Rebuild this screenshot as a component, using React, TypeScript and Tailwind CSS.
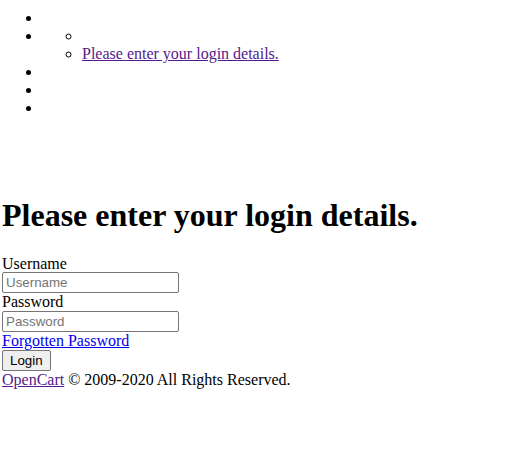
export default function App() {
  const serif = "font-['Liberation_Serif','Times_New_Roman',serif]";
  return (
    <div className={`${serif} text-[16px] leading-[18px] text-black bg-white min-h-[450px] px-[2px] pt-[9px]`}>
      <ul className="list-disc pl-[40px]">
        <li>&nbsp;</li>
        <li>
          <ul className="list-[circle] pl-[40px]">
            <li>&nbsp;</li>
            <li>
              <a href="#" className="text-[#551a8b] underline">Please enter your login details.</a>
            </li>
          </ul>
        </li>
        <li>&nbsp;</li>
        <li>&nbsp;</li>
        <li>&nbsp;</li>
      </ul>
      <div className="h-[59px]" />
      <h1 className="text-[32px] leading-[37px] font-bold my-[21px]">Please enter your login details.</h1>
      <div>
        <label className="block leading-[17px]">Username</label>
        <input
          type="text"
          placeholder="Username"
          className="block w-[177px] h-[21px] border border-[#767676] rounded-[2px] pl-[3px] pr-[2px] font-['Liberation_Sans',Arial,sans-serif] text-[13.33px] placeholder:text-[#757575]"
        />
        <label className="block">Password</label>
        <input
          type="password"
          placeholder="Password"
          className="block w-[177px] h-[21px] border border-[#767676] rounded-[2px] pl-[3px] pr-[2px] font-['Liberation_Sans',Arial,sans-serif] text-[13.33px] placeholder:text-[#757575]"
        />
        <a href="#" className="block w-fit text-[#0000ee] underline">Forgotten Password</a>
        <button className="block h-[21px] px-[7px] bg-[#efefef] border border-[#767676] rounded-[2px] font-['Liberation_Sans',Arial,sans-serif] text-[13.33px] leading-[15px]">
          Login
        </button>
        <div>
          <a href="#" className="text-[#551a8b] underline">OpenCart</a> © 2009-2020 All Rights Reserved.
        </div>
      </div>
    </div>
  );
}
